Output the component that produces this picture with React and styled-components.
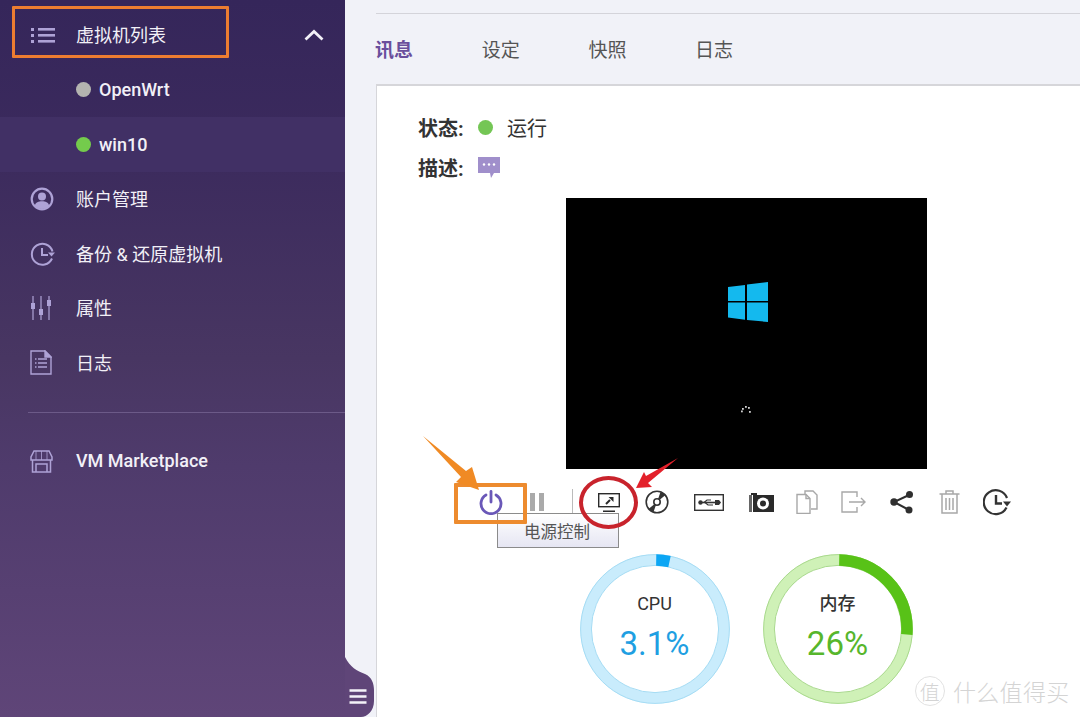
import React from "react";
import styled, { createGlobalStyle } from "styled-components";

const Global = createGlobalStyle`
  html, body { margin: 0; padding: 0; }
  body { background: #f1f2f8; font-family: Roboto, "Noto Sans CJK SC", sans-serif; }
`;
const FONT = `Roboto, "Noto Sans CJK SC", sans-serif`;

const Page = styled.div`
  position: relative; display: flex; width: 1080px; height: 717px; overflow: hidden; background: #f1f2f8;
`;
const Sidebar = styled.aside`
  flex: 0 0 345px; height: 717px; padding-top: 8px; box-sizing: border-box;
  background: linear-gradient(180deg, #35265a 0%, #3b2a5d 20%, #483662 50%, #4f3b6c 65%, #5f4578 100%);
  color: #f2f0f7; font-family: ${FONT};
`;
const NavRow = styled.div`
  display: flex; align-items: center; height: 54.6px; padding-left: ${p => (p.$sub ? 76 : 30)}px;
  box-sizing: border-box; font-size: 18px; font-weight: 500;
  background: ${p => (p.$active ? "#413065" : "transparent")};
`;
const NavIcon = styled.span`
  flex: 0 0 46px; height: 26px; display: flex; align-items: center;
  svg { display: block; }
`;
const NavLabel = styled.span`
  flex: 1; white-space: nowrap; padding-bottom: 2px; font-weight: ${p => (p.$latin ? 500 : 400)};
`;
const Chevron = styled.span`flex: 0 0 41px; display: flex; svg { display: block; }`;
const Dot = styled.span`
  flex: 0 0 15px; height: 15px; border-radius: 50%; margin-right: 8px; background: ${p => p.$color};
`;
const Divider = styled.hr`
  border: 0; height: 1px; margin: 22px 0 21px 28px; background: #6c5a88;
`;
const Main = styled.main`
  flex: 1; min-width: 0; padding: 13px 0 0 31px; box-sizing: border-box; overflow: hidden;
  font-family: ${FONT};
`;
const TopRule = styled.div`height: 1px; background: #d4d4da; margin-bottom: 15px;`;
const Tabs = styled.nav`display: flex; gap: 69.7px; height: 38px; align-items: center; margin: 0 0 17px -1px;`;
const Tab = styled.span`
  width: 37px; font-size: 19px; white-space: nowrap; font-weight: ${p => (p.$on ? 700 : 400)};
  color: ${p => (p.$on ? "#6a4f9c" : "#555")};
`;
const Card = styled.section`
  width: 740px; height: 640px; box-sizing: border-box; background: #fff;
  border: 1px solid #d6d6da; border-top-width: 2px; padding-top: 21px;
`;
const InfoRow = styled.div`
  display: flex; align-items: center; height: 40px; padding-left: 41px; font-size: 20px; color: #333;
`;
const InfoKey = styled.strong`flex: 0 0 60px; font-weight: 700; color: #333; white-space: nowrap;`;
const StatusDot = styled.span`
  flex: 0 0 15px; height: 15px; border-radius: 50%; background: #74c655; margin-right: 14px;
`;
const Screen = styled.div`
  width: 361px; height: 271px; margin: 11px auto 0; background: #000; svg { display: block; }
`;
const Toolbar = styled.div`
  position: relative; display: flex; width: 556px; height: 40px; margin: 13px auto 0;
`;
const Tool = styled.span`
  flex: 0 0 ${p => p.$w}px; display: flex; align-items: center; justify-content: center;
  svg { display: block; }
`;
const Sep = styled.span`width: 1px; height: 26px; background: #bbb;`;
const Tooltip = styled.div`
  position: absolute; left: 29px; top: 31px; width: 122px; height: 35px; box-sizing: border-box;
  border: 1px solid #8b8b8b; background: linear-gradient(180deg, #fff, #e6e6f3);
  display: flex; align-items: center; justify-content: center; font-size: 16.500px; color: #555; padding-right: 2px;
`;
const Gauges = styled.div`display: flex; justify-content: center; gap: 33px; margin-top: 32px;`;
const Gauge = styled.div`
  display: grid; width: 150px; height: 150px;
  > * { grid-area: 1 / 1; }
`;
const GaugeText = styled.div`
  display: flex; flex-direction: column; align-items: center; padding-top: 38px; gap: 9px;
`;
const GaugeLabel = styled.span`font-size: 18px; line-height: 24px; color: #333; font-weight: ${p => p.$b ? 500 : 400};`;
const GaugeValue = styled.span`font-size: 33px; line-height: 38px; color: ${p => p.$color};`;
const Overlay = styled.svg`position: absolute; left: 0; top: 0; pointer-events: none;`;
const Frame = styled.div`
  position: absolute; box-sizing: border-box; pointer-events: none;
  left: ${p => p.$x}px; top: ${p => p.$y}px; width: ${p => p.$w}px; height: ${p => p.$h}px;
  border: ${p => p.$b}px solid ${p => p.$c}; border-radius: ${p => p.$r || "1px"};
`;
const Notch = styled.svg`position: absolute; left: 345px; top: 657px;`;
const Watermark = styled.div`
  position: absolute; left: 915px; top: 674px; display: flex; align-items: center; gap: 8px;
  color: #d4d4d4; font-family: ${FONT}; font-weight: 300; font-size: 23px; white-space: nowrap; letter-spacing: 0.3px;
`;
const WatermarkBadge = styled.span`
  width: 28px; height: 28px; border: 1px solid #e2e2e2; border-radius: 50%; font-size: 20px;
  display: flex; align-items: center; justify-content: center;
`;

const S = "#aea2d6";
const ListIcon = () => (
  <svg width="26" height="20" viewBox="0 0 26 20" fill={S}>
    <rect x="1" y="3" width="3" height="3" /><rect x="1" y="9" width="3" height="3" /><rect x="1" y="15" width="3" height="3" />
    <rect x="8" y="3" width="17" height="2.600" /><rect x="8" y="9" width="17" height="2.600" /><rect x="8" y="15" width="17" height="2.600" />
  </svg>
);
const UserIcon = () => (
  <svg width="24" height="24" viewBox="0 0 24 24">
    <circle cx="12" cy="12" r="10.300" fill="none" stroke={S} strokeWidth="2.200" />
    <circle cx="12" cy="9.500" r="4" fill={S} />
    <path d="M4.600 19c1-4 4-4.800 7.400-4.800s6.400.8 7.400 4.800a10.500 10.500 0 0 1-14.800 0z" fill={S} />
  </svg>
);
const BackupIcon = () => (
  <svg width="26" height="26" viewBox="0 0 26 26" fill="none" stroke={S} strokeWidth="2">
    <path d="M22 17.500a10.500 10.500 0 1 1 .5-7" />
    <path d="M12 7v7h6" />
    <path d="M18 11.500h7l-3.500 4z" fill={S} stroke="none" />
  </svg>
);
const SlidersIcon = () => (
  <svg width="22" height="26" viewBox="0 0 22 26" fill={S}>
    <rect x="2.400" y="1" width="1.200" height="24" /><rect x="10.400" y="1" width="1.200" height="24" /><rect x="18.400" y="1" width="1.200" height="24" />
    <rect x="1" y="8" width="4" height="6" /><rect x="9" y="14" width="4" height="6" /><rect x="17" y="5" width="4" height="6" />
  </svg>
);
const DocIcon = () => (
  <svg width="22" height="25" viewBox="0 0 22 25" fill="none" stroke={S} strokeWidth="1.400">
    <path d="M1 1h14l6 6v17H1z" />
    <path d="M15 1v6h6z" fill={S} />
    <path d="M5 9h1.500M8 9h9M5 13h1.500M8 13h9M5 17h1.500M8 17h9" />
  </svg>
);
const ShopIcon = () => (
  <svg width="23" height="23" viewBox="0 0 23 23" fill="none" stroke={S} strokeWidth="1.500">
    <path d="M4 1h15l3 6v3H1V7z" />
    <path d="M2.500 10v12h18V10M6 14h11v8H6z" />
    <path d="M6 1v9M11.500 1v9M17 1v9" strokeWidth="0.800" />
  </svg>
);
const ChevronUp = () => (
  <svg width="20" height="12" viewBox="0 0 20 12" fill="none" stroke="#f2f0f7" strokeWidth="2.800">
    <path d="M1.500 10.500L10 2.500l8.500 8" />
  </svg>
);
const CommentIcon = () => (
  <svg width="22" height="21" viewBox="0 0 22 21">
    <path d="M0 0h22v16h-6l-3 5-1-5H0z" fill="#a08fcb" />
    <circle cx="6" cy="7.500" r="1.200" fill="#fff" /><circle cx="11" cy="7.500" r="1.200" fill="#fff" /><circle cx="16" cy="7.500" r="1.200" fill="#fff" />
  </svg>
);
const BootScreen = () => (
  <svg width="361" height="271" viewBox="0 0 361 271">
    <path d="M162 89L179 86.900V103H162zM181 86.600L202 84V103H181zM162 104.500H179V121.700L162 119.600zM181 104.500H202V124L181 122z" fill="#14b9ee" />
    <g fill="#cfcfcf">
      <rect x="176" y="210" width="1.800" height="1.800" /><rect x="179" y="208" width="1.800" height="1.800" /><rect x="182" y="209" width="1.800" height="1.800" />
      <rect x="175" y="212.500" width="1.800" height="1.800" /><rect x="183" y="213" width="1.800" height="1.800" />
    </g>
  </svg>
);
const PowerIcon = () => (
  <svg width="26" height="26" viewBox="0 0 26 26" fill="none" stroke="#6a58b8" strokeWidth="2.800" strokeLinecap="round">
    <path d="M8 6a10 10 0 1 0 10 0" /><path d="M13 2.500v10.500" />
  </svg>
);
const PauseIcon = () => (
  <svg width="16" height="20" viewBox="0 0 16 20" fill="#aaa"><rect x="1" y="1" width="5" height="18" /><rect x="10" y="1" width="5" height="18" /></svg>
);
const MonitorIcon = () => (
  <svg width="24" height="24" viewBox="0 0 24 24">
    <rect x="1.700" y="3.700" width="20.600" height="13" fill="none" stroke="#2a2a2a" strokeWidth="1.400" />
    <path d="M9 14l4-4" stroke="#2a2a2a" strokeWidth="2" fill="none" />
    <path d="M11.500 7H16.500V12z" fill="#2a2a2a" />
    <rect x="6" y="20.500" width="12" height="1.500" fill="#2a2a2a" />
  </svg>
);
const DiscIcon = () => (
  <svg width="24" height="24" viewBox="0 0 24 24">
    <circle cx="12" cy="12" r="10.800" fill="#fff" stroke="#333" strokeWidth="1.600" />
    <path d="M12 12L3.500 19a11 11 0 0 0 5 3zM12 12L20.500 5a11 11 0 0 0-5-3z" fill="#333" />
    <circle cx="12" cy="12" r="3.200" fill="#fff" stroke="#333" strokeWidth="1.600" />
  </svg>
);
const UsbIcon = () => (
  <svg width="30" height="17" viewBox="0 0 30 17">
    <rect x="0.700" y="0.700" width="28.600" height="15.600" fill="#fff" stroke="#333" strokeWidth="1.400" />
    <path d="M5 8.500h19" stroke="#333" strokeWidth="1.600" />
    <path d="M10 8.500l3-2.500h4M11 8.500l3 2.500h5" stroke="#333" strokeWidth="1.200" fill="none" />
    <circle cx="6.500" cy="8.500" r="2.200" fill="#333" /><path d="M21 6h4l2 2.500-2 2.500h-4z" fill="#333" />
  </svg>
);
const CameraIcon = () => (
  <svg width="25" height="20" viewBox="0 0 25 20">
    <path d="M0 3h2V1h6v2h17v17H0z" fill="#2a2a2a" />
    <rect x="3" y="3" width="1" height="17" fill="#fff" />
    <rect x="0" y="3" width="3" height="17" fill="#666" />
    <circle cx="14" cy="11.500" r="6" fill="#fff" /><circle cx="14" cy="11.500" r="3" fill="#2a2a2a" />
  </svg>
);
const CopyIcon = () => (
  <svg width="22" height="24" viewBox="0 0 22 24" fill="none" stroke="#a8a8a8" strokeWidth="1.400">
    <path d="M9 4V1h8l4 4v14h-6" /><path d="M1 4.500h9l4 4v15H1z" fill="#fff" /><path d="M10 4.500v4h4" />
  </svg>
);
const ExportIcon = () => (
  <svg width="25" height="22" viewBox="0 0 25 22" fill="none" stroke="#a8a8a8" strokeWidth="1.400">
    <path d="M16 6V1H1v20h15v-5" /><path d="M8 11h16M20 7l4 4-4 4" />
  </svg>
);
const ShareIcon = () => (
  <svg width="26" height="24" viewBox="0 0 26 24">
    <path d="M20 5L5 12l15 8" fill="none" stroke="#2f2f2f" strokeWidth="2" />
    <circle cx="20.500" cy="4.500" r="3.500" fill="#2f2f2f" /><circle cx="5" cy="12" r="3.700" fill="#2f2f2f" /><circle cx="20" cy="20" r="3.500" fill="#2f2f2f" />
  </svg>
);
const TrashIcon = () => (
  <svg width="21" height="24" viewBox="0 0 21 24" fill="none" stroke="#a8a8a8" strokeWidth="1.500">
    <path d="M0.500 4h20M7 4V1h7v3M3 4v19h15V4M7 8v12M10.500 8v12M14 8v12" />
  </svg>
);
const HistoryIcon = () => (
  <svg width="28" height="27" viewBox="0 0 28 27" fill="none" stroke="#333" strokeWidth="2.200">
    <path d="M23.500 18.500A12 12 0 1 1 24 9" />
    <path d="M13 6v8.500h6" strokeWidth="2.400" />
    <path d="M20 12.500h8l-4 5z" fill="#333" stroke="none" />
  </svg>
);

const Ring = ({ pale, edge, strong, pct }) => (
  <svg width="150" height="150" viewBox="0 0 150 150">
    <circle cx="75" cy="75" r="69" fill="none" stroke={pale} strokeWidth="11" />
    <circle cx="75" cy="75" r="74.400" fill="none" stroke={edge} strokeWidth="1" />
    <circle cx="75" cy="75" r="63.600" fill="none" stroke={edge} strokeWidth="1" />
    <circle cx="75" cy="75" r="69" fill="none" stroke={strong} strokeWidth="11.500" pathLength="100"
      strokeDasharray={`${pct} 100`} transform="rotate(-89 75 75)" />
  </svg>
);

const nav = [
  [<UserIcon />, "账户管理"],
  [<BackupIcon />, "备份 & 还原虚拟机"],
  [<SlidersIcon />, "属性"],
  [<DocIcon />, "日志"],
];
const tools = [
  [46, <PowerIcon />], [46, <PauseIcon />], [24, <Sep />], [50, <MonitorIcon />], [46, <DiscIcon />], [58, <UsbIcon />],
  [46, <CameraIcon />], [46, <CopyIcon />], [46, <ExportIcon />], [52, <ShareIcon />], [42, <TrashIcon />], [54, <HistoryIcon />],
];

export default function App() {
  return (
    <Page>
      <Global />
      <Sidebar>
        <NavRow>
          <NavIcon><ListIcon /></NavIcon>
          <NavLabel>虚拟机列表</NavLabel>
          <Chevron><ChevronUp /></Chevron>
        </NavRow>
        <NavRow $sub><Dot $color="#b4b4b0" />OpenWrt</NavRow>
        <NavRow $sub $active><Dot $color="#74cb4c" />win10</NavRow>
        {nav.map(([icon, label]) => (
          <NavRow key={label}><NavIcon>{icon}</NavIcon><NavLabel>{label}</NavLabel></NavRow>
        ))}
        <Divider />
        <NavRow><NavIcon><ShopIcon /></NavIcon><NavLabel $latin>VM Marketplace</NavLabel></NavRow>
      </Sidebar>
      <Main>
        <TopRule />
        <Tabs>
          <Tab $on>讯息</Tab><Tab>设定</Tab><Tab>快照</Tab><Tab>日志</Tab>
        </Tabs>
        <Card>
          <InfoRow><InfoKey>状态:</InfoKey><StatusDot />运行</InfoRow>
          <InfoRow><InfoKey>描述:</InfoKey><CommentIcon /></InfoRow>
          <Screen><BootScreen /></Screen>
          <Toolbar>
            {tools.map(([w, icon], i) => <Tool key={i} $w={w}>{icon}</Tool>)}
            <Tooltip>电源控制</Tooltip>
          </Toolbar>
          <Gauges>
            <Gauge>
              <Ring pale="#c9ecfc" edge="#a5dcf4" strong="#0ca6f4" pct={3.1} />
              <GaugeText><GaugeLabel>CPU</GaugeLabel><GaugeValue $color="#1f9fe2">3.1%</GaugeValue></GaugeText>
            </Gauge>
            <Gauge>
              <Ring pale="#cff1b7" edge="#a9d98d" strong="#58c217" pct={26} />
              <GaugeText><GaugeLabel $b>内存</GaugeLabel><GaugeValue $color="#57b62c">26%</GaugeValue></GaugeText>
            </Gauge>
          </Gauges>
        </Card>
      </Main>

      <Notch width="32" height="60" viewBox="0 0 32 60">
        <path d="M0 0C5 10 12 14 20 17C27 20 29 27 29 33V44C29 54 22 60 16 60H0z" fill="#5f4578" />
        <path d="M4.500 33.500h17M4.500 39.500h17M4.500 45.500h17" stroke="#f4f2f8" strokeWidth="2.600" />
      </Notch>
      <Frame $x={12} $y={6} $w={217} $h={52} $b={3} $c="#ed7d31" />
      <Frame $x={454} $y={483} $w={73} $h={41} $b={4} $c="#ed8b2e" />
      <Frame $x={579} $y={476} $w={59} $h={53} $b={4} $c="#c8232c" $r="50%" />
      <Overlay width="1080" height="717" viewBox="0 0 1080 717">
        <path d="M423 436L466 471L472 467L479 490L456 482L461 477z" fill="#f08a24" />
        <path d="M678 458L648 483L652 487L636 488L644 472L646 476z" fill="#e3202a" />
      </Overlay>
      <Watermark>
        <WatermarkBadge>值</WatermarkBadge>
        <span>什么值得买</span>
      </Watermark>
    </Page>
  );
}
